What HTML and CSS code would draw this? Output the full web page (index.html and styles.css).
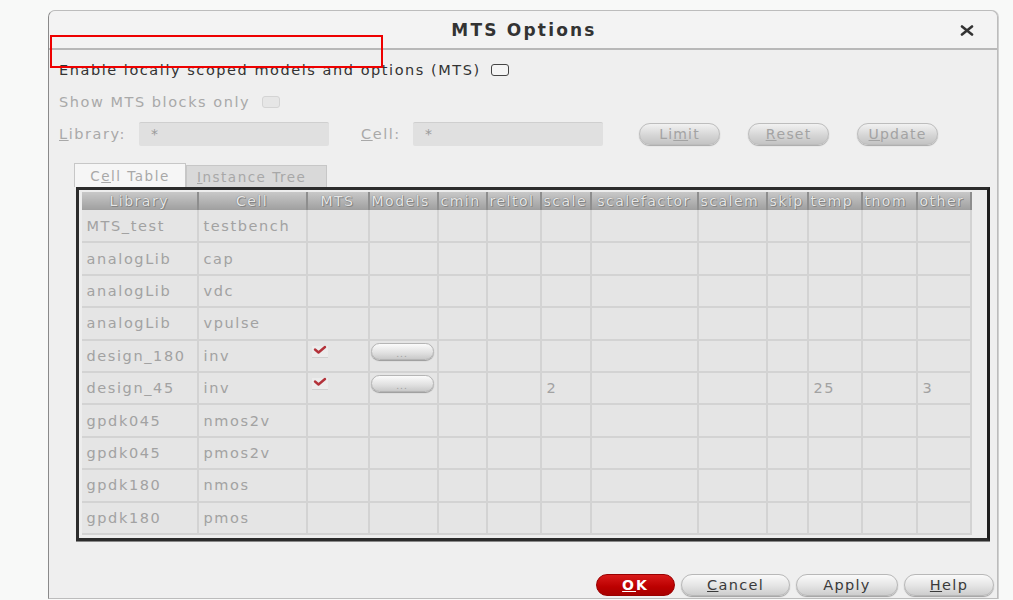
FILE: index.html
```html
<!DOCTYPE html>
<html>
<head>
<meta charset="utf-8">
<link rel="stylesheet" href="styles.css">
</head>
<body>
<div class="screen">
  <div class="dialog">
    <div class="titlebar">
      <span class="title">MTS Options</span>
      <svg class="close" width="14" height="11" viewBox="0 0 14 11"><path d="M2 1.5 L12 9.5 M12 1.5 L2 9.5" stroke="#333" stroke-width="2.6" stroke-linecap="round"/></svg>
    </div>
    <div class="content">
      <div class="row enable-row">
        <span class="lbl-dark">Enable locally scoped models and options (MTS)</span>
        <span class="chk"></span>
      </div>
      <div class="row show-row">
        <span class="lbl-dim">Show MTS blocks only</span>
        <span class="chk dim"></span>
      </div>
      <div class="row filter-row">
        <span class="lbl-dim lib-lbl"><u>L</u>ibrary:</span>
        <span class="field">*</span>
        <span class="lbl-dim cell-lbl"><u>C</u>ell:</span>
        <span class="field">*</span>
        <span class="pill dis limit">Li<u>m</u>it</span>
        <span class="pill dis"><u>R</u>eset</span>
        <span class="pill dis"><u>U</u>pdate</span>
      </div>
      <div class="tabs">
        <span class="tab active">C<u>e</u>ll Table</span>
        <span class="tab"><u>I</u>nstance Tree</span>
      </div>
      <div class="frame">
        <table class="grid">
          <colgroup>
            <col style="width:116px"><col style="width:109px"><col style="width:62px"><col style="width:69px"><col style="width:49px"><col style="width:54px"><col style="width:50px"><col style="width:107px"><col style="width:69px"><col style="width:41px"><col style="width:54px"><col style="width:55px"><col style="width:54px">
          </colgroup>
          <thead>
            <tr><th>Library</th><th>Cell</th><th>MTS</th><th class="lft">Models</th><th class="lft">cmin</th><th class="lft">reltol</th><th class="lft">scale</th><th>scalefactor</th><th class="lft">scalem</th><th class="lft">skip</th><th class="lft">temp</th><th class="lft">tnom</th><th class="lft">other</th></tr>
          </thead>
          <tbody>
            <tr><td>MTS_test</td><td>testbench</td><td></td><td></td><td></td><td></td><td></td><td></td><td></td><td></td><td></td><td></td><td></td></tr>
            <tr><td>analogLib</td><td>cap</td><td></td><td></td><td></td><td></td><td></td><td></td><td></td><td></td><td></td><td></td><td></td></tr>
            <tr><td>analogLib</td><td>vdc</td><td></td><td></td><td></td><td></td><td></td><td></td><td></td><td></td><td></td><td></td><td></td></tr>
            <tr><td>analogLib</td><td>vpulse</td><td></td><td></td><td></td><td></td><td></td><td></td><td></td><td></td><td></td><td></td><td></td></tr>
            <tr><td>design_180</td><td>inv</td><td class="top"><span class="tick"><svg width="16" height="12" viewBox="0 0 16 12"><path d="M3 5.5 L6.5 8.5 L13 3" fill="none" stroke="#b3323a" stroke-width="2.4" stroke-linecap="round" stroke-linejoin="round"/></svg></span></td><td class="top"><span class="dots">...</span></td><td></td><td></td><td></td><td></td><td></td><td></td><td></td><td></td><td></td></tr>
            <tr><td>design_45</td><td>inv</td><td class="top"><span class="tick"><svg width="16" height="12" viewBox="0 0 16 12"><path d="M3 5.5 L6.5 8.5 L13 3" fill="none" stroke="#b3323a" stroke-width="2.4" stroke-linecap="round" stroke-linejoin="round"/></svg></span></td><td class="top"><span class="dots">...</span></td><td></td><td></td><td>2</td><td></td><td></td><td></td><td>25</td><td></td><td>3</td></tr>
            <tr><td>gpdk045</td><td>nmos2v</td><td></td><td></td><td></td><td></td><td></td><td></td><td></td><td></td><td></td><td></td><td></td></tr>
            <tr><td>gpdk045</td><td>pmos2v</td><td></td><td></td><td></td><td></td><td></td><td></td><td></td><td></td><td></td><td></td><td></td></tr>
            <tr><td>gpdk180</td><td>nmos</td><td></td><td></td><td></td><td></td><td></td><td></td><td></td><td></td><td></td><td></td><td></td></tr>
            <tr><td>gpdk180</td><td>pmos</td><td></td><td></td><td></td><td></td><td></td><td></td><td></td><td></td><td></td><td></td><td></td></tr>
          </tbody>
        </table>
      </div>
      <div class="footer">
        <span class="pill ok"><u>O</u>K</span>
        <span class="pill btn cancel"><u>C</u>ancel</span>
        <span class="pill btn apply">Apply</span>
        <span class="pill btn help"><u>H</u>elp</span>
      </div>
    </div>
  </div>
  <div class="annot"></div>
</div>
</body>
</html>
```

FILE: styles.css
```css
html, body {
  margin: 0;
  padding: 0;
  background: #f8f9f8;
  overflow: hidden;
}
.screen {
  position: relative;
  width: 1013px;
  height: 600px;
  font-family: "DejaVu Sans", "Open Sans", sans-serif;
}
.dialog {
  position: absolute;
  left: 48px;
  top: 10px;
  width: 948px;
  height: 587px;
  background: #efefef;
  border: 1px solid #bcbcbc;
  border-left-color: #8a8a8a;
  border-radius: 7px 7px 0 0;
  box-shadow: 1px 0 0 #d0d0d0;
  display: flex;
  flex-direction: column;
}
.titlebar {
  height: 37px;
  border-bottom: 2px solid #b8b8b8;
  display: flex;
  align-items: center;
  justify-content: center;
  position: relative;
  background: #f3f3f3;
  border-radius: 7px 7px 0 0;
}
.title {
  font-weight: 700;
  font-size: 17px;
  color: #333;
  letter-spacing: 2.2px;
  margin-left: 2px;
}
.close {
  position: absolute;
  right: 23px;
  top: 14px;
}
.content {
  padding-left: 10px;
  display: flex;
  flex-direction: column;
}
.row {
  display: flex;
  align-items: center;
}
.enable-row {
  margin-top: 10px;
  height: 20px;
}
.show-row {
  margin-top: 12px;
  height: 20px;
}
.lbl-dark {
  font-size: 14.5px;
  color: #333;
  letter-spacing: 1.55px;
}
.lbl-dim {
  font-size: 14.5px;
  color: #a9a9a9;
  letter-spacing: 1.55px;
}
.chk {
  width: 16px;
  height: 10px;
  border: 1.5px solid #444;
  border-radius: 3px;
  background: #f4f4f4;
  margin-left: 10px;
}
.chk.dim {
  border-color: #d4d4d4;
  background: #e6e6e6;
  margin-left: 12px;
}
.filter-row {
  margin-top: 10px;
  height: 24px;
}
.field {
  height: 24px;
  width: 190px;
  box-sizing: border-box;
  background: #e0e0e0;
  border-top: 1px solid #cfcfcf;
  border-radius: 2px;
  color: #9a9a9a;
  font-size: 14px;
  padding-left: 12px;
  line-height: 22px;
}
.lib-lbl { width: 80px; }
.cell-lbl { margin-left: 32px; width: 52px; }
.pill {
  display: inline-flex;
  align-items: center;
  justify-content: center;
  height: 22px;
  border-radius: 11px;
  box-sizing: border-box;
  font-size: 14px;
}
.pill.dis {
  width: 81px;
  margin-left: 28px;
  background: linear-gradient(#f2f2f2, #d6d6d6 55%, #c4c4c4);
  border: 1px solid #bdbdbd;
  box-shadow: 0 1px 1px #a8a8a8;
  color: #a3a3a3;
  letter-spacing: 1.2px;
}
.pill.limit { margin-left: 36px; }
.tabs {
  margin-top: 17px;
  margin-left: 15px;
  display: flex;
  align-items: flex-end;
  height: 24px;
}
.tab {
  height: 22px;
  box-sizing: border-box;
  font-size: 13.5px;
  color: #a8a8a8;
  background: #d9d9d9;
  border: 1px solid #c7c7c7;
  border-bottom: none;
  padding: 0 10px;
  display: flex;
  align-items: center;
  letter-spacing: 1.5px;
  width: 141px;
}
.tab.active {
  height: 24px;
  width: 112px;
  background: #f6f6f6;
  justify-content: center;
  padding: 0;
}
.frame {
  margin-left: 17px;
  width: 914px;
  height: 354px;
  box-sizing: border-box;
  border: 3px solid #2c2c2c;
  border-right-color: #1e1e1e;
  background: #ededed;
  padding: 2px 0 0 2px;
  overflow: hidden;
  box-shadow: 0 1px 0 #888;
}
.grid {
  border-collapse: collapse;
  table-layout: fixed;
  width: 889px;
  font-size: 14.5px;
}
.grid th {
  height: 18px;
  padding: 0;
  font-size: 14px;
  font-weight: 400;
  color: #e6e6e6;
  text-shadow: 0 0 1px #5f5f5f, 1px 1px 0 #8a8a8a;
  background: linear-gradient(#c8c8c8, #9f9f9f);
  border-left: 1px solid #ececec;
  border-right: 2px solid #8e8e8e;
  white-space: nowrap;
  overflow: hidden;
  text-align: center;
  line-height: 18px;
  letter-spacing: 1.5px;
}
.grid th.lft {
  text-align: left;
  padding-left: 2px;
}
.grid td {
  height: 32.4px;
  padding: 0 0 0 5px;
  border: 2px solid #d3d3d3;
  border-top: none;
  background: #e5e5e5;
  color: #a2a2a2;
  white-space: nowrap;
  overflow: hidden;
  letter-spacing: 1.6px;
  box-sizing: border-box;
}
.grid td:first-child { border-left: none; }
.grid td.top {
  vertical-align: top;
  padding-top: 3px;
}
.tick {
  display: inline-block;
  width: 16px;
  height: 11px;
  background: #ececec;
  border-bottom: 1px solid #d0d0d0;
  margin-left: -1px;
  margin-top: 2px;
}
.tick svg { display: block; margin-top: -2px; }
.dots {
  display: flex;
  align-items: flex-end;
  justify-content: center;
  width: 63px;
  height: 17px;
  margin-left: -4px;
  margin-top: -1px;
  box-sizing: border-box;
  border-radius: 9px;
  background: linear-gradient(#fbfbfb, #e0e0e0 60%, #c9c9c9);
  border: 1px solid #b5b5b5;
  box-shadow: 0 1px 1px #999;
  font-size: 9px;
  line-height: 10px;
  color: #a0a0a0;
  letter-spacing: 1px;
}
.footer {
  display: flex;
  justify-content: flex-end;
  margin-top: 33px;
  padding-right: 3px;
  gap: 6px;
}
.pill.btn {
  background: linear-gradient(#fafafa, #e4e4e4 55%, #cdcdcd);
  border: 1px solid #b8b8b8;
  box-shadow: 0 1px 1px #a0a0a0;
  color: #3a3a3a;
  font-size: 14.5px;
  letter-spacing: 1.3px;
}
.pill.ok {
  width: 79px;
  background: linear-gradient(#d81a1a, #bb0000 60%, #a80000);
  border: 1px solid #990000;
  color: #fff;
  font-weight: 700;
  font-size: 14px;
  letter-spacing: 2px;
}
.cancel { width: 109px; }
.apply { width: 102px; }
.help { width: 90px; }
.annot {
  position: absolute;
  left: 50px;
  top: 35px;
  width: 329px;
  height: 29px;
  border: 2px solid #ee0000;
}
```
